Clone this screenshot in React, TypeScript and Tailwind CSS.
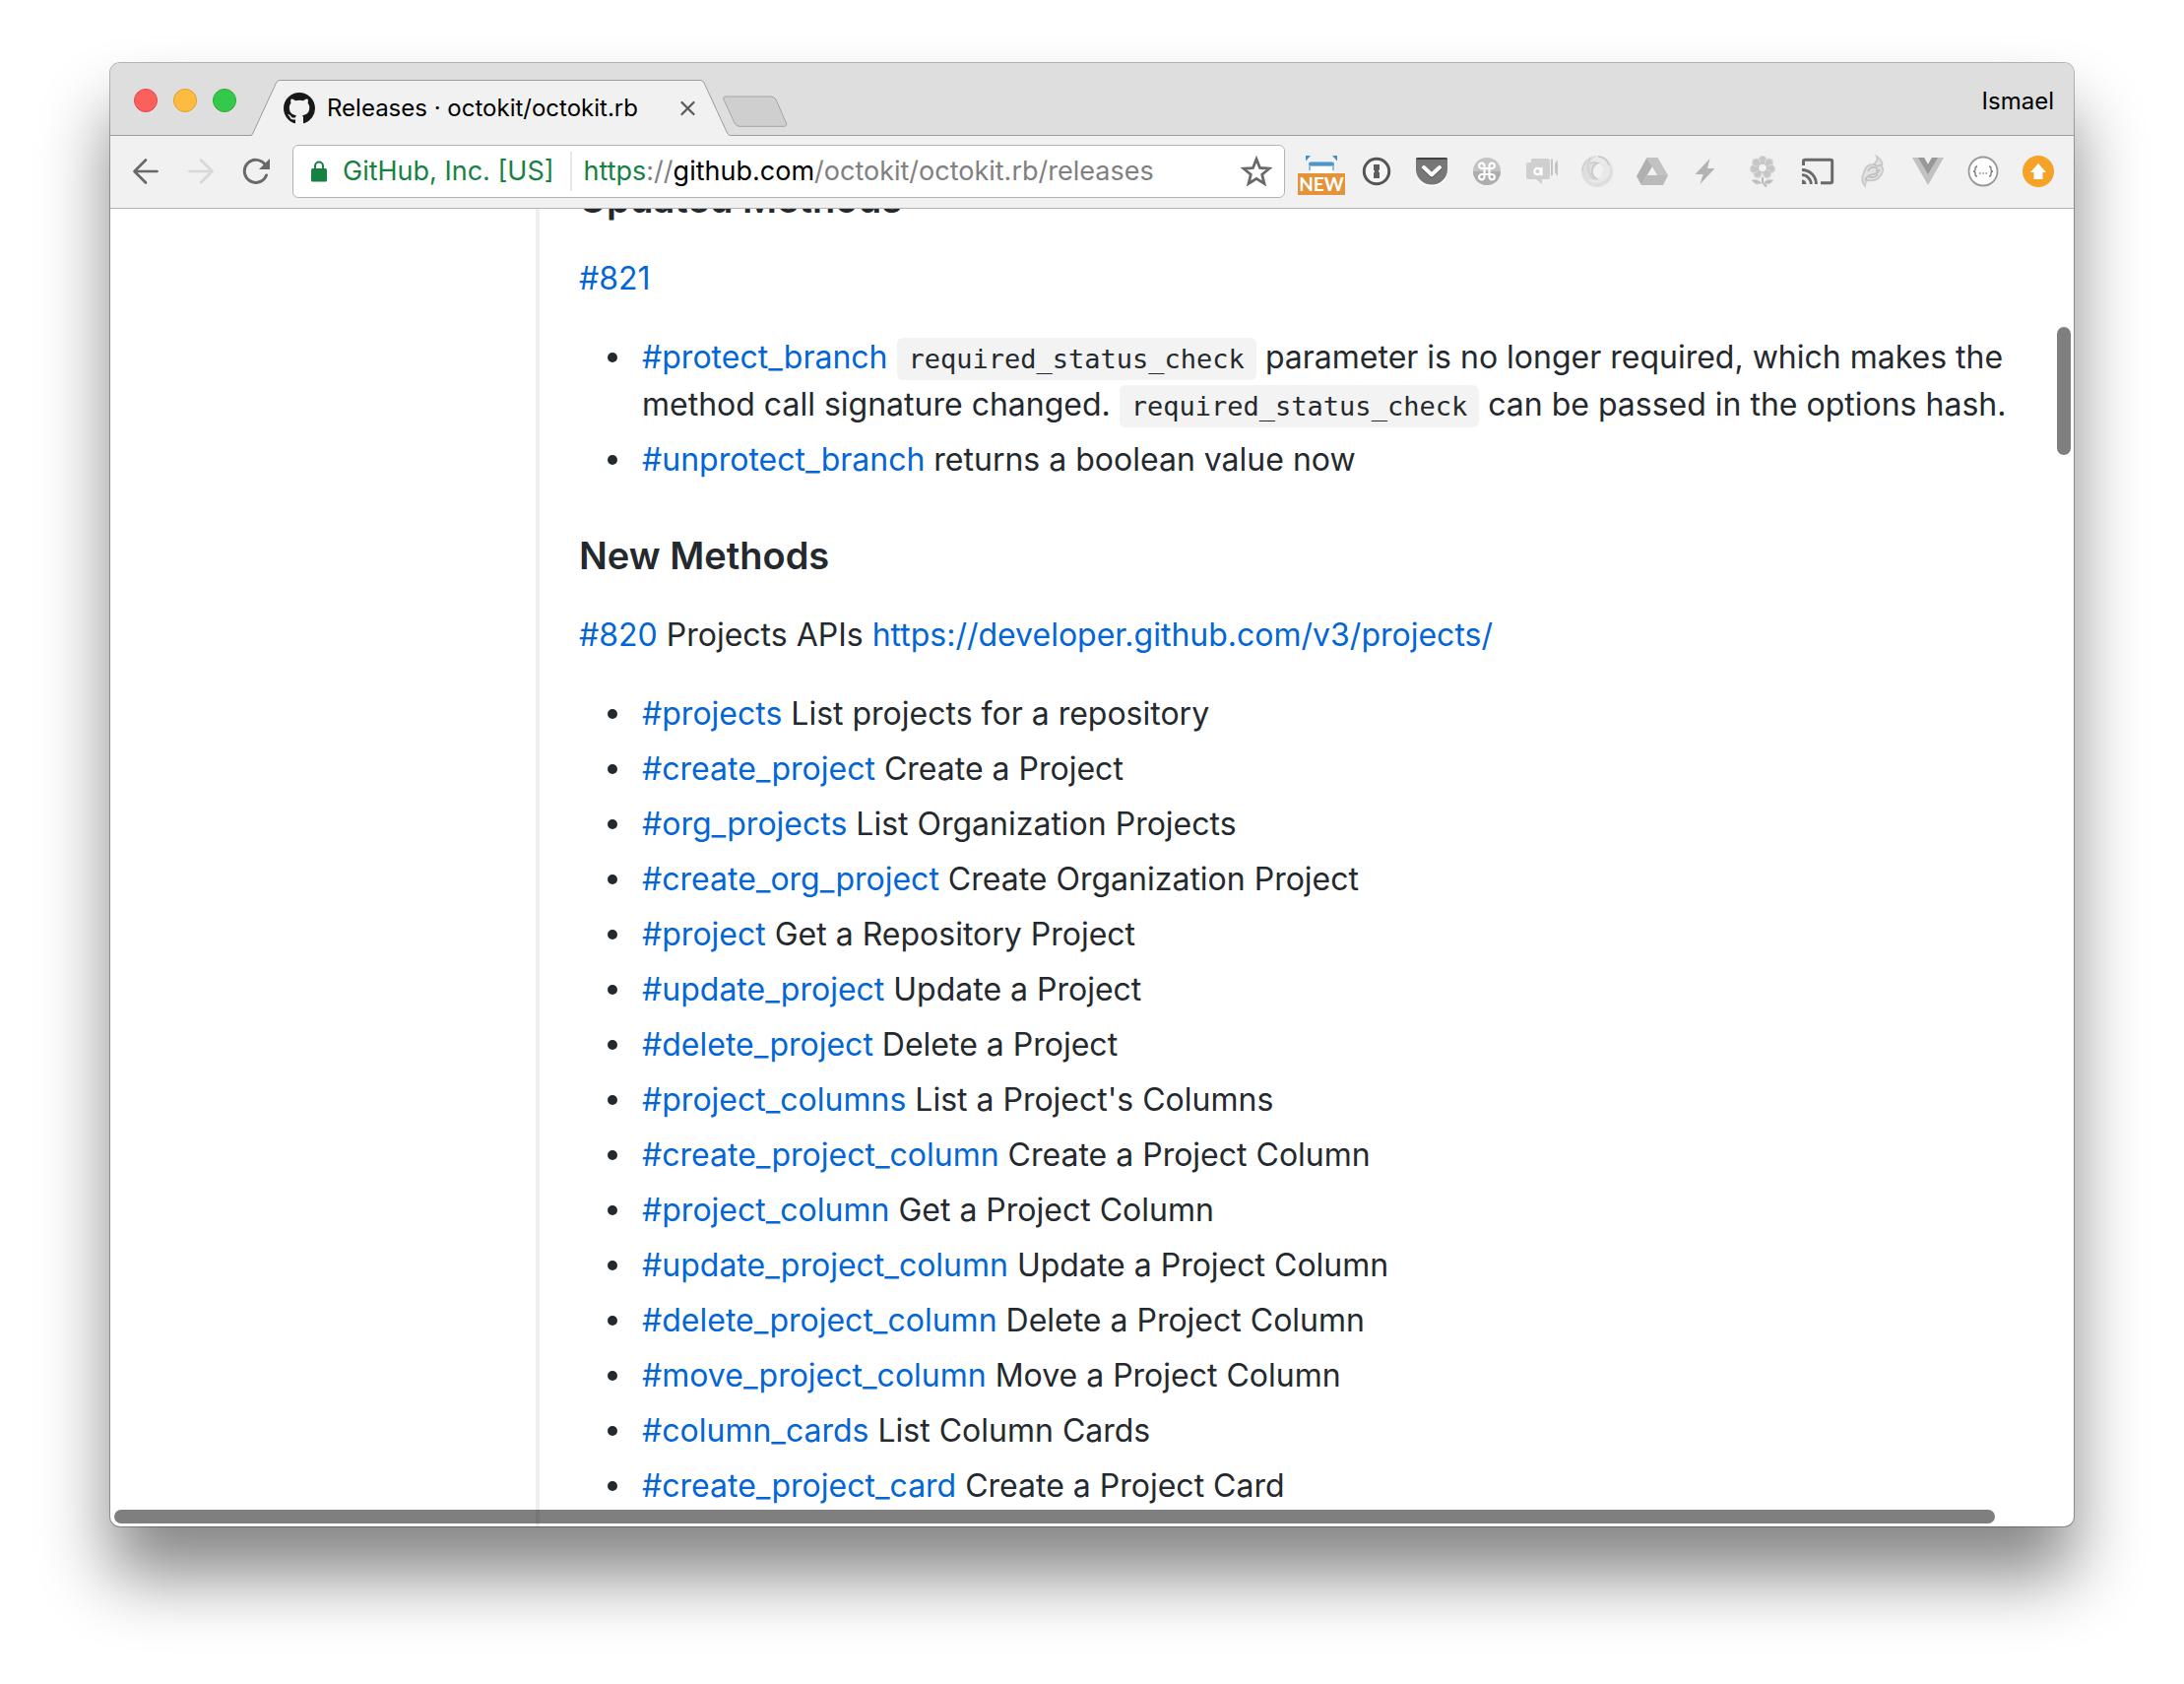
import React from 'react';

const releaseMethods: [string, string][] = [
  ['#projects', 'List projects for a repository'],
  ['#create_project', 'Create a Project'],
  ['#org_projects', 'List Organization Projects'],
  ['#create_org_project', 'Create Organization Project'],
  ['#project', 'Get a Repository Project'],
  ['#update_project', 'Update a Project'],
  ['#delete_project', 'Delete a Project'],
  ['#project_columns', "List a Project's Columns"],
  ['#create_project_column', 'Create a Project Column'],
  ['#project_column', 'Get a Project Column'],
  ['#update_project_column', 'Update a Project Column'],
  ['#delete_project_column', 'Delete a Project Column'],
  ['#move_project_column', 'Move a Project Column'],
  ['#column_cards', 'List Column Cards'],
  ['#create_project_card', 'Create a Project Card'],
];

function Icon({ children }: { children: React.ReactNode }) {
  return (
    <svg viewBox="0 0 32 32" className="size-8 overflow-visible" fill="none" aria-hidden="true">
      {children}
    </svg>
  );
}

function ToolButton({ label, children }: { label: string; children: React.ReactNode }) {
  return (
    <button type="button" aria-label={label} className="size-8 shrink-0">
      {children}
    </button>
  );
}

function Link({ children }: { children: React.ReactNode }) {
  return (
    <a href="#" className="text-[#0366d6]">
      {children}
    </a>
  );
}

function Code({ children }: { children: React.ReactNode }) {
  return (
    <code className="rounded-md bg-[#f3f3f3] px-3 py-[6px] font-['DejaVu_Sans_Mono',monospace] text-[27px] leading-8">
      {children}
    </code>
  );
}

function Bullet({ children }: { children: React.ReactNode }) {
  return (
    <li className="relative before:absolute before:top-[19px] before:-left-[35px] before:size-[10px] before:rounded-full before:bg-[#24292e] before:content-['']">
      {children}
    </li>
  );
}

function GitHubMark() {
  return (
    <svg viewBox="0 0 16 16" className="size-8 shrink-0" fill="#191717" aria-hidden="true">
      <path d="M8 0C3.58 0 0 3.58 0 8c0 3.54 2.29 6.53 5.47 7.59.4.07.55-.17.55-.38 0-.19-.01-.82-.01-1.49-2.01.37-2.53-.49-2.69-.94-.09-.23-.48-.94-.82-1.13-.28-.15-.68-.52-.01-.53.63-.01 1.08.58 1.23.82.72 1.21 1.87.87 2.33.66.07-.52.28-.87.51-1.07-1.78-.2-3.64-.89-3.64-3.95 0-.87.31-1.59.82-2.15-.08-.2-.36-1.02.08-2.12 0 0 .67-.21 2.2.82.64-.18 1.32-.27 2-.27.68 0 1.36.09 2 .27 1.53-1.04 2.2-.82 2.2-.82.44 1.1.16 1.92.08 2.12.51.56.82 1.27.82 2.15 0 3.07-1.87 3.75-3.65 3.95.29.25.54.73.54 1.48 0 1.07-.01 1.93-.01 2.2 0 .21.15.46.55.38A8.013 8.013 0 0016 8c0-4.42-3.58-8-8-8z" />
    </svg>
  );
}

function TabStrip() {
  return (
    <header className="flex h-[74px] shrink-0 items-end bg-[#dedede] pl-6 shadow-[inset_0_-1px_0_#9b9b9b]">
      <div className="flex gap-4 self-center pt-[2px]">
        <button type="button" aria-label="Close window" className="size-6 rounded-full border border-[#e2464a] bg-[#fc605c]" />
        <button type="button" aria-label="Minimize window" className="size-6 rounded-full border border-[#dfa023] bg-[#fdbc40]" />
        <button type="button" aria-label="Zoom window" className="size-6 rounded-full border border-[#2bac2f] bg-[#34c94a]" />
      </div>
      <div className="relative ml-[15px] flex h-[57px] w-[487px] shrink-0 items-center pr-[35px] pl-[33px]">
        <svg viewBox="0 0 487 57" className="absolute inset-0 size-full" aria-hidden="true">
          <path d="M0 57V56.500Q1 56.500 2 54L25.500 3Q27 .5 29 .5H456Q459 .5 460 3L483.500 54Q485 56.500 487 56.500V57Z" fill="#f1f1f1" />
          <path d="M0 56.500Q1 56.500 2 54L25.500 3Q27 .5 29 .5H456Q459 .5 460 3L483.500 54Q485 56.500 487 56.500" fill="none" stroke="#9b9b9b" />
          <path d="M2 56.500H484" stroke="#f1f1f1" />
        </svg>
        <div className="relative flex flex-1 items-center">
          <GitHubMark />
          <span className="ml-3 flex-1 text-[24px] whitespace-nowrap text-black">Releases · octokit/octokit.rb</span>
          <button type="button" aria-label="Close tab" className="size-4">
            <svg viewBox="0 0 16 16" className="size-4" aria-hidden="true">
              <path d="M1.500 2L13.500 14M13.500 2L1.500 14" stroke="#5a5a5a" strokeWidth="2.200" strokeLinecap="round" />
            </svg>
          </button>
        </div>
      </div>
      <button type="button" aria-label="New tab" className="mb-[9px] -ml-2 h-8 w-[66px]">
        <svg viewBox="0 0 66 32" className="h-8 w-[66px]" aria-hidden="true">
          <path d="M3 1H49Q52 1 54 4L64.500 28Q65.500 31.300 62 31.300H17Q13.500 31.300 12 28L1 4Q-.3 1 3 1Z" fill="#cfcfcf" stroke="#a3a3a3" />
        </svg>
      </button>
      <button type="button" className="mr-5 ml-auto self-center pt-1 text-[24px] text-black">
        Ismael
      </button>
    </header>
  );
}

function Extensions() {
  return (
    <>
      <ToolButton label="Page capture, new">
        <Icon>
          <path d="M0 0H5L0 5.500ZM32 0H27L32 5.500Z" fill="#3f8fbf" />
          <path d="M3 15V9Q3 6 6 6H26Q29 6 29 9V15Z" fill="#8fc0df" />
          <path d="M3.500 8.500H28.500" stroke="#4a98c8" strokeWidth="3" />
          <path d="M5 11H27V18H5Z" fill="#fff" />
          <rect x="-8" y="18" width="48" height="22" fill="#e3943b" />
          <text x="16" y="36" textAnchor="middle" fill="#fff" fontFamily="Lato" fontWeight="700" fontSize="19">
            NEW
          </text>
        </Icon>
      </ToolButton>
      <ToolButton label="1Password">
        <Icon>
          <circle cx="16" cy="16" r="12.700" fill="#f6f6f6" stroke="#555" strokeWidth="3" />
          <path d="M13 9H19V14L17.800 16L19 17.500V23H13V18L14.200 16L13 14.500Z" fill="#5c5c5c" />
        </Icon>
      </ToolButton>
      <ToolButton label="Pocket">
        <Icon>
          <path d="M0 5V17Q2 31 16 31T32 17V5Z" fill="#fff" />
          <path d="M0 4Q0 2 2 2H30Q32 2 32 4V14A16 15.500 0 0 1 0 14Z" fill="#777" />
          <path d="M0 4Q0 2 2 2H30Q32 2 32 4Z" fill="#444" />
          <path d="M8 13L16 20.500L24 13" stroke="#444" strokeWidth="4" strokeLinecap="round" strokeLinejoin="round" />
          <path d="M8 12L16 19.500L24 12" stroke="#fff" strokeWidth="4" strokeLinecap="round" strokeLinejoin="round" />
        </Icon>
      </ToolButton>
      <ToolButton label="Keyboard shortcuts">
        <Icon>
          <circle cx="16" cy="16" r="14" fill="#c4c4c4" />
          <path d="M2 16A14 14 0 0 0 30 16Z" fill="#adadad" />
          <path d="M13.500 13H11A2.700 2.700 0 1 1 13.500 10.500V21.500A2.700 2.700 0 1 1 11 19H21A2.700 2.700 0 1 1 18.500 21.500V10.500A2.700 2.700 0 1 1 21 13Z" stroke="#fff" strokeWidth="2.200" />
        </Icon>
      </ToolButton>
      <ToolButton label="Chat">
        <Icon>
          <path d="M2 7H5V4Q5 3 6 3H22Q24 3 24 5V22Q24 24 22 24H16V29L10 24H2Q0 24 0 22V9Q0 7 2 7Z" fill="#cfcfcf" />
          <path d="M25 3.500H27V20L25 20.500ZM32 4V21L29 17V8Z" fill="#c4c4c4" />
          <circle cx="11.500" cy="16" r="3.200" stroke="#fff" strokeWidth="2.200" />
          <path d="M15.500 12V20.300" stroke="#fff" strokeWidth="2.200" />
        </Icon>
      </ToolButton>
      <ToolButton label="Viewer">
        <Icon>
          <path fillRule="evenodd" d="M16 0A16 16 0 1 1 16 32A16 16 0 1 1 16 0ZM17.500 8Q12 10 12 17Q12 22 15.500 24Q22 22 22 15Q22 9.500 17.500 8Z" fill="#dedede" />
          <path d="M17 .5Q29 1 29 13Q29 26 16 28Q9 28 6 24Q12 26 17 23.500Q23 20 22 13Q21 8 16 7Q12 6 9 8Q11 2 17 .5Z" fill="#e9e9e9" />
          <path d="M9 8Q12 6 16.500 7.500Q10 10 11 18Q12 22 16 24M17 .8Q26 2 28 10" stroke="#c6c6c6" strokeWidth="1.400" />
          <path d="M.8 16Q1 7 9 2.500Q5 10 8 17Q10 24 17 24" stroke="#cecece" strokeWidth="1.400" />
        </Icon>
      </ToolButton>
      <ToolButton label="Drive">
        <Icon>
          <path d="M10.500 2L0 21L5 30L16 11Z" fill="#b0b0b0" />
          <path d="M10.500 2H21.500L32 20H21Z" fill="#c2c2c2" />
          <path d="M5 30L11 20H32L27 30Z" fill="#bababa" />
          <path d="M16 12L11 20H20.500Z" fill="#f1f1f1" />
        </Icon>
      </ToolButton>
      <ToolButton label="Lightning">
        <Icon>
          <path d="M19.500 3L4.500 19H12.500L9.500 29L24.500 13H17Z" fill="#b3b3b3" transform="translate(-1 0)" />
        </Icon>
      </ToolButton>
      <ToolButton label="Flower">
        <Icon>
          <g fill="#c6c6c6" stroke="#dadada" strokeWidth="1.200">
            <circle cx="16" cy="4.500" r="4" />
            <circle cx="22.500" cy="7" r="4" />
            <circle cx="24.500" cy="13.500" r="4" />
            <circle cx="20.500" cy="18.500" r="4" />
            <circle cx="11" cy="18.500" r="4" />
            <circle cx="7.500" cy="13.500" r="4" />
            <circle cx="9.500" cy="7" r="4" />
          </g>
          <circle cx="16" cy="12.500" r="4.500" fill="#f3f3f3" stroke="#b5b5b5" />
          <path d="M16 22V27L20 31.500" stroke="#b9b9b9" strokeWidth="2" />
          <path d="M5 25Q11 23 15 28Q9 31 5 25ZM27 25Q20 23 17 28Q23 31 27 25Z" fill="#bcbcbc" stroke="#d6d6d6" />
        </Icon>
      </ToolButton>
      <ToolButton label="Cast">
        <Icon>
          <path d="M1.500 10V6Q1.500 4.300 3.200 4.300H29Q30.700 4.300 30.700 6V26Q30.700 27.700 29 27.700H19" stroke="#6a6a6a" strokeWidth="3" />
          <path d="M0 14.500A14.500 14.500 0 0 1 14.500 29M0 19.700A9.300 9.300 0 0 1 9.300 29" stroke="#6a6a6a" strokeWidth="2.800" />
          <path d="M0 24.500A4.500 4.500 0 0 1 4.500 29H0Z" fill="#6a6a6a" />
        </Icon>
      </ToolButton>
      <ToolButton label="Feather">
        <Icon>
          <path d="M20 1Q27 6 25 11Q28 15 24 20Q20 27 9 25L8 31Q3 25 7 17Q9 9 16 9Q22 6 20 1Z" fill="#e2e2e2" stroke="#c9c9c9" strokeWidth="1.800" />
          <path d="M8 25Q10 20 16 19T23 14M11 16Q13 11 18 12T19 16M12 21Q17 24 21 19M17 9Q22 12 24 9" stroke="#bdbdbd" strokeWidth="1.600" />
        </Icon>
      </ToolButton>
      <ToolButton label="Vue">
        <Icon>
          <path d="M0 2H12L16 9L20 2H32L16 30Z" fill="#c1c1c1" />
          <path d="M6 2H12L16 9L20 2H26L16 19Z" fill="#989898" />
        </Icon>
      </ToolButton>
      <ToolButton label="JSON">
        <Icon>
          <circle cx="16" cy="16" r="14.500" fill="#fff" stroke="#999" strokeWidth="1.800" />
          <path d="M10 11Q8 11 8 13V14.500Q8 16 6 16Q8 16 8 17.500V19Q8 21 10 21M22 11Q24 11 24 13V14.500Q24 16 26 16Q24 16 24 17.500V19Q24 21 22 21" stroke="#777" strokeWidth="1.300" />
          <path d="M12 18H13.500M15.300 18H16.800M18.600 18H20.100" stroke="#888" strokeWidth="1.400" />
        </Icon>
      </ToolButton>
      <ToolButton label="Update available">
        <Icon>
          <circle cx="16" cy="16" r="16" fill="#f5a228" />
          <path d="M16 8L24 17H20.500V24H11.500V17H8Z" fill="#fff" />
        </Icon>
      </ToolButton>
    </>
  );
}

function Toolbar() {
  return (
    <nav aria-label="Browser toolbar" className="flex h-[74px] shrink-0 items-center gap-6 border-b border-[#b3b3b3] bg-[#f1f1f1] px-5 pb-px">
      <ToolButton label="Back">
        <Icon>
          <path d="M27.500 16H5M16 4.500L4.500 16L16 27.500" stroke="#696969" strokeWidth="2.700" strokeLinecap="round" strokeLinejoin="round" />
        </Icon>
      </ToolButton>
      <ToolButton label="Forward">
        <Icon>
          <path d="M4.500 16H27M16 4.500L27.500 16L16 27.500" stroke="#d8d8d8" strokeWidth="2.700" strokeLinecap="round" strokeLinejoin="round" />
        </Icon>
      </ToolButton>
      <ToolButton label="Reload">
        <Icon>
          <path d="M25 9A11.500 11.500 0 1 0 26.500 20" stroke="#696969" strokeWidth="3" strokeLinecap="round" />
          <path d="M30 3V14H19Z" fill="#696969" />
        </Icon>
      </ToolButton>
      <div className="-mx-[3px] flex h-[54px] min-w-0 flex-1 items-center rounded-md border border-[#b3b3b3] bg-white pr-3 pl-[18px] text-[27px] whitespace-nowrap">
        <svg viewBox="0 0 16 22" className="h-[22px] w-4 shrink-0" fill="none" aria-hidden="true">
          <path d="M4 9V5.500A4 4 0 0 1 12 5.500V9" stroke="#178144" strokeWidth="2" />
          <rect y="8" width="16" height="13.500" rx="1.500" fill="#178144" />
        </svg>
        <span className="ml-4 text-[#178144]">GitHub, Inc. [US]</span>
        <span className="mr-3 ml-4 h-10 w-[2px] shrink-0 bg-[#e8e8e8]" />
        <div role="textbox" aria-label="Address" className="flex-1 text-[#808080]">
          <span className="text-[#178144]">https</span>://<span className="text-black">github.com</span>/octokit/octokit.rb/releases
        </div>
        <ToolButton label="Bookmark this page">
          <Icon>
            <path d="M16 3.500L19.500 12.500L29 13.200L21.700 19.300L24 28.500L16 23.400L8 28.500L10.300 19.300L3 13.200L12.500 12.500Z" stroke="#696969" strokeWidth="2.800" />
          </Icon>
        </ToolButton>
      </div>
      <Extensions />
    </nav>
  );
}

export default function App() {
  return (
    <div className="flex min-h-screen flex-col bg-white px-[112px] pt-16 pb-40 font-['Inter',sans-serif]">
      <div className="flex flex-1 flex-col overflow-hidden rounded-[10px] bg-white shadow-[0_0_0_1px_rgba(0,0,0,0.28),0_50px_70px_rgba(0,0,0,0.48)]">
        <TabStrip />
        <Toolbar />
        <div className="relative min-h-0 flex-1 basis-0 overflow-hidden">
          <main className="flex">
            <div className="-mb-6 w-[436px] shrink-0 border-r-4 border-[#eee]" />
            <article className="-mt-[35px] min-w-0 flex-1 pr-8 pb-6 pl-10 text-[32px] leading-[48px] text-[#24292e]">
              <h3 className="mb-8 text-[38px] leading-[50px] font-semibold">Updated Methods</h3>
              <p className="mb-8">
                <Link>#821</Link>
              </p>
              <ul className="mb-12 flex flex-col gap-2 pl-16">
                <Bullet>
                  <Link>#protect_branch</Link> <Code>required_status_check</Code> parameter is no longer required, which makes the method call
                  signature changed. <Code>required_status_check</Code> can be passed in the options hash.
                </Bullet>
                <Bullet>
                  <Link>#unprotect_branch</Link> returns a boolean value now
                </Bullet>
              </ul>
              <h3 className="mb-8 text-[38px] leading-[50px] font-semibold">New Methods</h3>
              <p className="mb-8">
                <Link>#820</Link> Projects APIs <Link>https://developer.github.com/v3/projects/</Link>
              </p>
              <ul className="flex flex-col gap-2 pl-16">
                {releaseMethods.map(([name, summary]) => (
                  <Bullet key={name}>
                    <Link>{name}</Link> {summary}
                  </Bullet>
                ))}
              </ul>
            </article>
          </main>
          <div className="absolute top-[120px] right-[3px] h-[130px] w-[14px] rounded-full bg-black/50" />
          <div className="absolute right-20 bottom-[3px] left-1 h-[14px] rounded-full bg-black/50" />
        </div>
      </div>
    </div>
  );
}
